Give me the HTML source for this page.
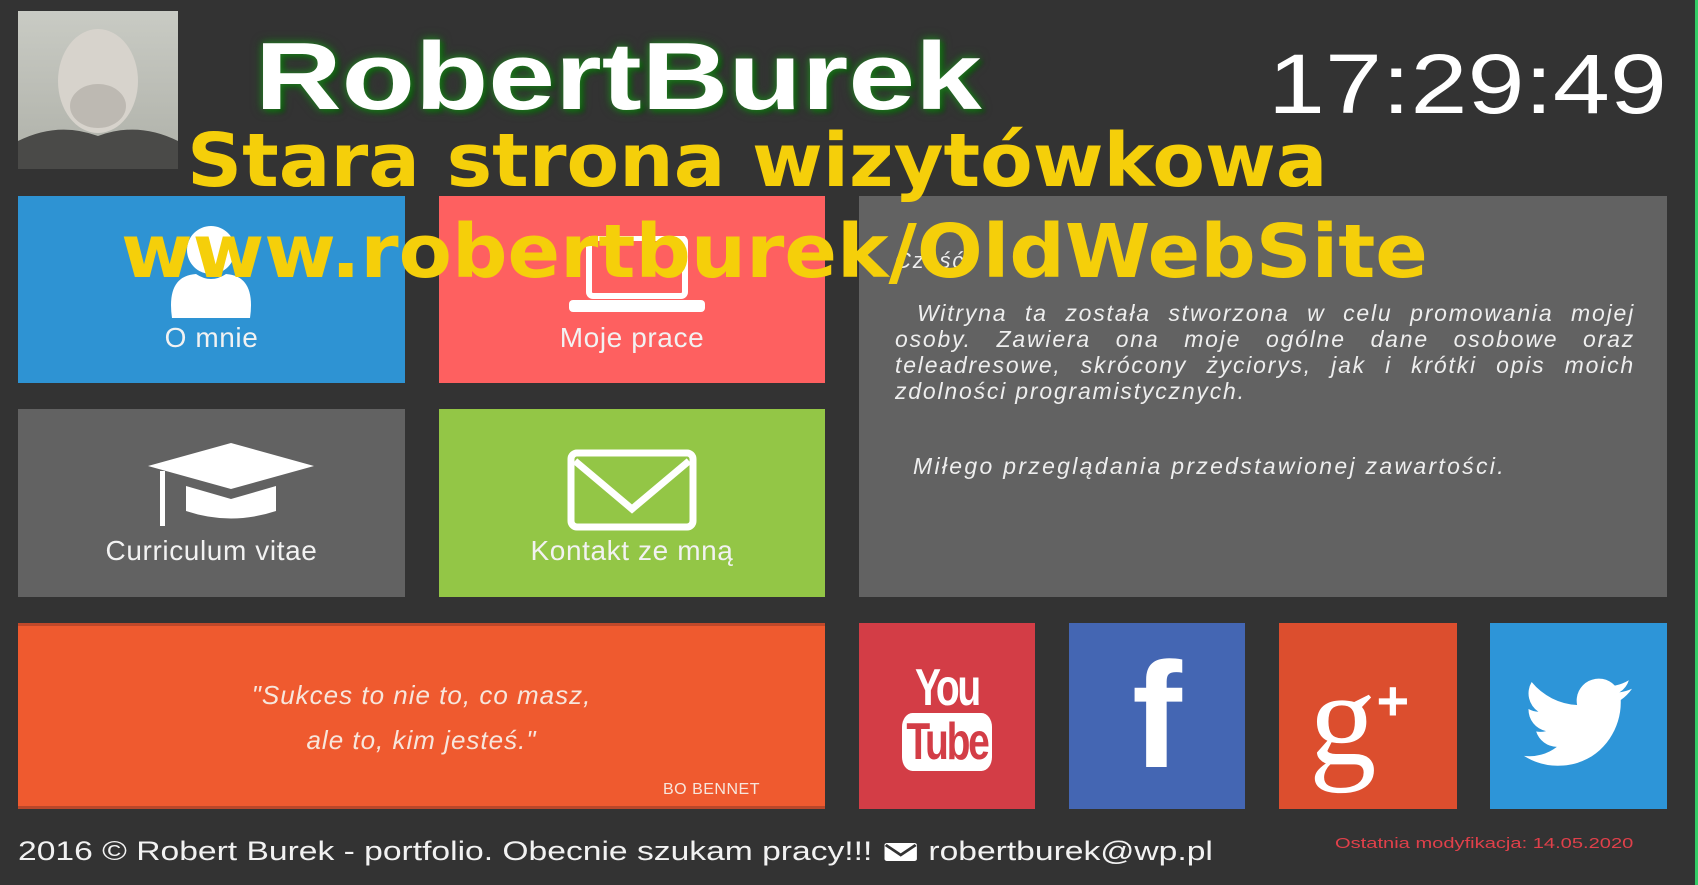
<!DOCTYPE html>
<html><head><meta charset="utf-8"><style>
*{margin:0;padding:0;box-sizing:border-box}
body{width:1698px;height:885px;background:#333;position:relative;overflow:hidden;font-family:"Liberation Sans",sans-serif;color:#fff}
.a{position:absolute}
.tile{position:absolute;text-align:center}
.lbl{position:absolute;left:0;right:0;font-size:28px;color:#f2f2f2;letter-spacing:0.6px}
.yt{position:absolute;font-family:"DejaVu Sans",sans-serif;font-weight:bold;color:#f5cf0a;font-size:74px;white-space:nowrap;line-height:1;transform-origin:0 0}
</style></head><body>
<div class="a" style="right:0;top:0;width:3px;height:885px;background:#3c6"></div>
<div class="a" style="left:18px;top:11px;width:160px;height:158px;background:linear-gradient(#c9cbc4,#aeb0a8)">
<svg width="160" height="158"><ellipse cx="80" cy="70" rx="40" ry="52" fill="#d7d3cc"/><ellipse cx="80" cy="95" rx="28" ry="22" fill="#bdb9b2"/><path d="M0 158 L0 130 Q40 110 80 125 Q120 110 160 130 L160 158Z" fill="#4a4a48"/></svg></div>
<div class="a" style="left:255px;top:22px;font-weight:bold;font-size:96px;color:#fff;text-shadow:0 0 6px #2a7a2a,0 0 10px #1a6a1a,3px 3px 4px #0a4a0a;transform:scaleX(1.25);transform-origin:0 0">RobertBurek</div>
<div class="a" style="left:1268px;top:36px;font-size:84px;color:#fff;transform:scaleX(1.22);transform-origin:0 0">17:29:49</div>

<div class="tile" style="left:18px;top:196px;width:387px;height:187px;background:#2e93d3">
<svg class="a" style="left:140px;top:30px" width="106" height="94"><circle cx="53" cy="24" r="24" fill="#fff"/><path d="M14 92 Q8 50 38 48 Q53 58 68 48 Q98 50 92 92Z" fill="#fff"/></svg>
<div class="lbl" style="top:126px">O mnie</div></div>
<div class="tile" style="left:439px;top:196px;width:386px;height:187px;background:#fe6060">
<svg class="a" style="left:128px;top:40px" width="140" height="80"><rect x="22" y="2" width="96" height="58" rx="4" fill="none" stroke="#fff" stroke-width="6"/><rect x="2" y="64" width="136" height="12" rx="4" fill="#fff"/></svg>
<div class="lbl" style="top:126px">Moje prace</div></div>
<div class="tile" style="left:18px;top:409px;width:387px;height:188px;background:#626262">
<svg class="a" style="left:128px;top:32px" width="170" height="90"><path d="M85 2 L168 25 L85 48 L2 25Z" fill="#fff"/><path d="M40 45 L40 70 Q85 85 130 70 L130 45 L85 58Z" fill="#fff"/><rect x="14" y="30" width="5" height="55" fill="#fff"/></svg>
<div class="lbl" style="top:126px">Curriculum vitae</div></div>
<div class="tile" style="left:439px;top:409px;width:386px;height:188px;background:#93c646">
<svg class="a" style="left:128px;top:40px" width="130" height="82"><rect x="4" y="4" width="122" height="74" rx="6" fill="none" stroke="#fff" stroke-width="7"/><path d="M8 12 L65 60 L122 12" fill="none" stroke="#fff" stroke-width="7"/></svg>
<div class="lbl" style="top:126px">Kontakt ze mną</div></div>

<div class="a" style="left:859px;top:196px;width:808px;height:401px;background:#626262;font-style:italic;color:#eee;font-size:23px;letter-spacing:1.8px">
<div class="a" style="left:36px;top:52px;font-size:22px">Cześć</div>
<div class="a" style="left:36px;top:104px;width:740px;text-align:justify;line-height:26px;text-indent:22px">Witryna ta została stworzona w celu promowania mojej osoby. Zawiera ona moje ogólne dane osobowe oraz teleadresowe, skrócony życiorys, jak i krótki opis moich zdolności programistycznych.</div>
<div class="a" style="left:54px;top:257px;letter-spacing:2.3px">Miłego przeglądania przedstawionej zawartości.</div></div>

<div class="a" style="left:18px;top:623px;width:807px;height:186px;background:#ef5a2f;border-bottom:3px solid #b9472a;border-top:3px solid #c0482a">
<div class="a" style="left:0;right:0;top:47px;text-align:center;font-style:italic;font-size:26px;line-height:45px;color:#f7e6dc;letter-spacing:1px">"Sukces to nie to, co masz,<br>ale to, kim jesteś."</div>
<div class="a" style="left:645px;top:155px;font-size:16px;color:#f7e6dc;letter-spacing:0.5px">BO BENNET</div></div>

<div class="a" style="left:859px;top:623px;width:176px;height:186px;background:#d33d46">
<div class="a" style="left:0;right:0;top:38px;text-align:center;font-weight:bold;font-size:52px;line-height:54px;letter-spacing:-3px;transform:scaleX(.75)">You<br><span style="background:#fff;color:#d33d46;border-radius:14px;padding:0 6px">Tube</span></div></div>
<div class="a" style="left:1069px;top:623px;width:176px;height:186px;background:#4466b3">
<div class="a" style="left:0;right:0;top:12px;text-align:center;font-weight:bold;font-size:150px;line-height:160px">f</div></div>
<div class="a" style="left:1279px;top:623px;width:178px;height:186px;background:#dc4e2e">
<div class="a" style="left:30px;top:8px;font-family:'Liberation Serif',serif;font-size:135px;line-height:140px">g<span style="font-family:'Liberation Sans';font-size:56px;vertical-align:44px;font-weight:bold">+</span></div></div>
<div class="a" style="left:1490px;top:623px;width:177px;height:186px;background:#2d95d8">
<svg class="a" style="left:32px;top:55px" width="112" height="90" viewBox="0 0 24 20"><path fill="#fff" d="M24 2.4a10 10 0 0 1-2.8.8A4.9 4.9 0 0 0 23.3.5a9.8 9.8 0 0 1-3.1 1.2A4.9 4.9 0 0 0 11.8 6 14 14 0 0 1 1.7.9a4.9 4.9 0 0 0 1.5 6.6 4.9 4.9 0 0 1-2.2-.6 4.9 4.9 0 0 0 3.9 4.9 4.9 4.9 0 0 1-2.2.1 4.9 4.9 0 0 0 4.6 3.4A9.9 9.9 0 0 1 0 17.3 14 14 0 0 0 7.5 19.5c9.1 0 14-7.5 14-14v-.6A10 10 0 0 0 24 2.4z"/></svg></div>

<div class="a" style="left:18px;top:836px;font-size:27px;color:#f2f2f2;white-space:nowrap;transform:scaleX(1.245);transform-origin:0 0">2016 © Robert Burek - portfolio. Obecnie szukam pracy!!! <svg width="30" height="22" style="vertical-align:-3px"><rect x="2" y="2" width="26" height="18" rx="2" fill="#fff"/><path d="M3 4 L15 14 L27 4" fill="none" stroke="#333" stroke-width="2.5"/></svg> robertburek@wp.pl</div>
<div class="a" style="left:1335px;top:835px;font-size:15px;color:#e0404a;transform:scaleX(1.34);transform-origin:0 0">Ostatnia modyfikacja: 14.05.2020</div>

<div class="yt" style="left:187px;top:124px;transform:scaleX(1.035)">Stara strona wizytówkowa</div>
<div class="yt" style="left:121px;top:215px;transform:scaleX(1.048)">www.robertburek/OldWebSite</div>
</body></html>
